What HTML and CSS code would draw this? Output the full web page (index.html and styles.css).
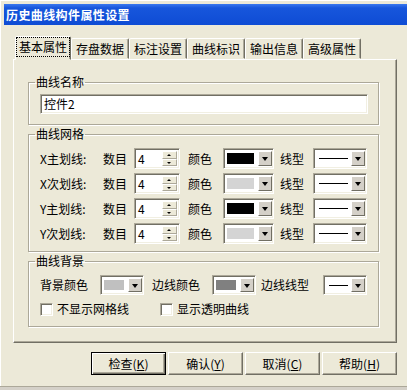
FILE: index.html
```html
<!doctype html>
<html lang="zh-CN">
<head>
    <meta charset="UTF-8">
    <meta name="viewport" content="width=device-width, initial-scale=1.0">
    <link rel="stylesheet" href="styles.css">
    <title>历史曲线构件属性设置</title>
</head>
<body>
<div class="dialog">
    <div class="titlebar">历史曲线构件属性设置</div>

    <div class="tabs">
        <div class="tab active"><span class="focus">基本属性</span></div>
        <div class="tab">存盘数据</div>
        <div class="tab">标注设置</div>
        <div class="tab">曲线标识</div>
        <div class="tab">输出信息</div>
        <div class="tab">高级属性</div>
    </div>

    <div class="panel">
        <fieldset class="group">
            <legend>曲线名称</legend>
            <div class="textbox">控件2</div>
        </fieldset>

        <fieldset class="group">
            <legend>曲线网格</legend>
            <div class="grid-rows">
                <div class="grid-row">
                    <span>X主划线:</span><span>数目</span>
                    <div class="spin"><span class="spin-text">4</span><span class="spin-btns"><i class="up"></i><i class="down"></i></span></div>
                    <span>颜色</span>
                    <div class="combo"><span class="swatch black"></span><span class="drop"></span></div>
                    <span>线型</span>
                    <div class="combo"><span class="line"></span><span class="drop"></span></div>
                </div>
                <div class="grid-row">
                    <span>X次划线:</span><span>数目</span>
                    <div class="spin"><span class="spin-text">4</span><span class="spin-btns"><i class="up"></i><i class="down"></i></span></div>
                    <span>颜色</span>
                    <div class="combo"><span class="swatch light"></span><span class="drop"></span></div>
                    <span>线型</span>
                    <div class="combo"><span class="line"></span><span class="drop"></span></div>
                </div>
                <div class="grid-row">
                    <span>Y主划线:</span><span>数目</span>
                    <div class="spin"><span class="spin-text">4</span><span class="spin-btns"><i class="up"></i><i class="down"></i></span></div>
                    <span>颜色</span>
                    <div class="combo"><span class="swatch black"></span><span class="drop"></span></div>
                    <span>线型</span>
                    <div class="combo"><span class="line"></span><span class="drop"></span></div>
                </div>
                <div class="grid-row">
                    <span>Y次划线:</span><span>数目</span>
                    <div class="spin"><span class="spin-text">4</span><span class="spin-btns"><i class="up"></i><i class="down"></i></span></div>
                    <span>颜色</span>
                    <div class="combo"><span class="swatch light"></span><span class="drop"></span></div>
                    <span>线型</span>
                    <div class="combo"><span class="line"></span><span class="drop"></span></div>
                </div>
            </div>
        </fieldset>

        <fieldset class="group">
            <legend>曲线背景</legend>
            <div class="bg-row">
                <span>背景颜色</span>
                <div class="combo small"><span class="swatch silver"></span><span class="drop"></span></div>
                <span>边线颜色</span>
                <div class="combo small"><span class="swatch gray"></span><span class="drop"></span></div>
                <span>边线线型</span>
                <div class="combo small"><span class="line"></span><span class="drop"></span></div>
            </div>
            <div class="check-row">
                <label class="check first"><span class="box"></span>不显示网格线</label>
                <label class="check"><span class="box"></span>显示透明曲线</label>
            </div>
        </fieldset>
    </div>

    <div class="buttons">
        <button class="btn default">检查(<u>K</u>)</button>
        <button class="btn">确认(<u>Y</u>)</button>
        <button class="btn">取消(<u>C</u>)</button>
        <button class="btn">帮助(<u>H</u>)</button>
    </div>
</div>
</body>
</html>
```

FILE: styles.css
```css
* {
    box-sizing: border-box;
}

body {
    margin: 0;
    background: #D4D0C8;
    font: 12px/14px "Noto Sans CJK SC", "Noto Sans", sans-serif;
    color: #000;
}

.dialog {
    width: 407px;
    height: 387px;
    padding: 4px 0 0 4px;
    background: #ECE9D8;
    box-shadow: inset 1px 1px #fff;
    border-bottom: 1px solid #ACA899;
}

.titlebar {
    height: 21px;
    padding-left: 2px;
    line-height: 21px;
    color: #fff;
    font-weight: bold;
    letter-spacing: 0.4px;
    background: linear-gradient(#3A78EE, #1756DC 4px, #0E4CD4);
}

/* tabs */
.tabs {
    display: flex;
    align-items: flex-end;
    height: 23px;
    margin: 11px 0 0 11px;
}

.tab {
    height: 21px;
    padding: 0 4px;
    line-height: 20px;
    border: 1px solid;
    border-color: #fff #716F64 transparent #fff;
    border-radius: 2px 2px 0 0;
    box-shadow: inset -1px 0 #ACA899;
    background: #ECE9D8;
}

.tab.active {
    position: relative;
    z-index: 1;
    height: 24px;
    margin-bottom: -1px;
    padding: 1px 1px 0;
    line-height: 18px;
}

.tab .focus {
    display: block;
    padding: 0 2px;
    outline: 1px dotted #000;
}

/* panel */
.panel {
    width: 384px;
    height: 284px;
    margin-left: 9px;
    padding: 15px 17px 0 14px;
    border: 1px solid;
    border-color: #fff #716F64 #716F64 #fff;
    box-shadow: inset -1px -1px #ACA899;
}

.group {
    margin: 2px 0 0;
    padding: 0 10px 10px 11px;
    border: 1px solid #ACA899;
    box-shadow: inset 1px 1px #fff, 1px 1px #fff;
}

.group:first-child {
    margin-top: 0;
}

.group legend {
    margin-left: -5px;
    padding: 0 1px;
    line-height: 14px;
}

/* sunken fields */
.textbox, .spin, .combo, .box {
    background: #fff;
    border: 1px solid;
    border-color: #ACA899 #fff #fff #ACA899;
    box-shadow: inset 1px 1px #716F64, inset -1px -1px #F1EFE2;
}

.textbox {
    height: 20px;
    margin-top: 5px;
    padding: 2px 3px;
}

.grid-rows {
    display: flex;
    flex-direction: column;
    gap: 4px;
    margin-top: 7px;
}

.grid-row {
    display: grid;
    grid-template-columns: 63px 31px 54px 35px 57px 33px 54px;
    align-items: center;
}

.group:nth-child(2) {
    padding-bottom: 7px;
}

.spin {
    display: flex;
    width: 46px;
    height: 21px;
    padding: 2px;
}

.spin-text {
    flex: 1;
    padding-left: 1px;
    line-height: 16px;
}

.spin-btns {
    display: flex;
    flex-direction: column;
    width: 15px;
}

.spin-btns i {
    position: relative;
    flex: 1;
    background: #ECE9D8;
    border: 1px solid;
    border-color: #fff #ACA899 #ACA899 #fff;
}

.spin-btns i::after {
    content: "";
    position: absolute;
    left: 4px;
    top: 2px;
    border-left: 2px solid transparent;
    border-right: 2px solid transparent;
}

.spin-btns .up::after {
    border-bottom: 2px solid #000;
}

.spin-btns .down::after {
    border-top: 2px solid #000;
}

.combo {
    display: flex;
    align-items: center;
    width: 51px;
    height: 21px;
    padding: 2px 1px 2px 2px;
}

.grid-row .combo:last-child {
    width: 54px;
}

.combo.small {
    width: 44px;
    height: 20px;
}

.swatch {
    flex: 1;
    align-self: stretch;
    margin: 2px 4px 2px 1px;
}

.swatch.black { background: #000; }
.swatch.light { background: #D4D4D4; }
.swatch.silver { background: #C0C0C0; }
.swatch.gray { background: #808080; }

.line {
    flex: 1;
    height: 1px;
    margin: 0 3px 0 3px;
    background: #000;
}

.drop {
    position: relative;
    align-self: stretch;
    width: 14px;
    background: #D4D0C8;
    border: 1px solid;
    border-color: #fff #716F64 #716F64 #fff;
}

.drop::after {
    content: "";
    position: absolute;
    left: 3px;
    top: 5px;
    border-left: 3px solid transparent;
    border-right: 3px solid transparent;
    border-top: 4px solid #000;
}

.bg-row {
    display: grid;
    grid-template-columns: 60px 52px 60px 49px 62px 44px;
    align-items: center;
    margin-top: 7px;
}

.check-row {
    display: flex;
    align-items: center;
    margin-top: 7px;
}

.check {
    display: flex;
    align-items: center;
    gap: 4px;
}

.check.first {
    width: 120px;
}

.box {
    width: 13px;
    height: 13px;
}

/* bottom buttons */
.buttons {
    display: flex;
    justify-content: flex-end;
    gap: 2px;
    margin-top: 9px;
    padding-right: 10px;
}

.btn {
    width: 75px;
    height: 23px;
    padding: 0;
    font: inherit;
    background: #ECE9D8;
    border: 1px solid;
    border-color: #fff #716F64 #716F64 #fff;
    box-shadow: inset -1px -1px #ACA899;
}

.btn.default {
    border-color: #000;
    box-shadow: inset 1px 1px #fff, inset -1px -1px #716F64, inset -2px -2px #ACA899;
}
```
